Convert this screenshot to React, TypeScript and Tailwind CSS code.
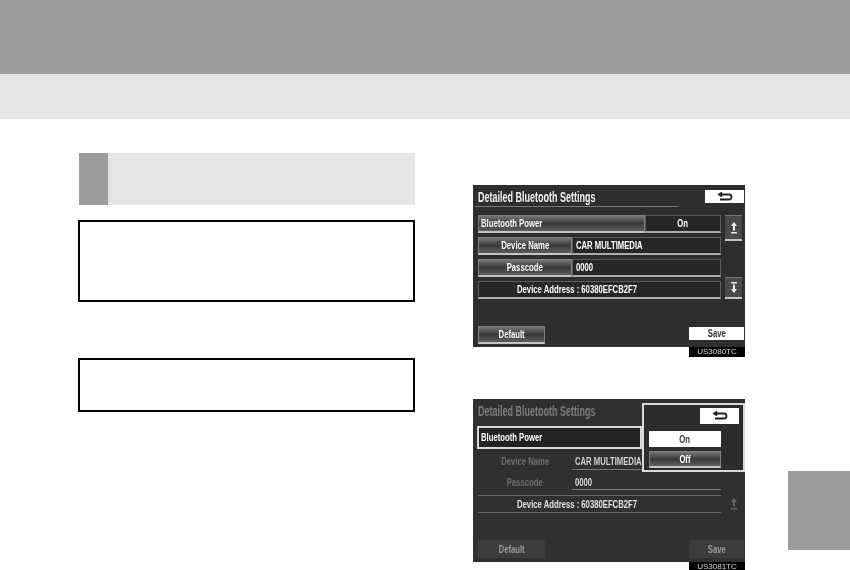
const font = { fontFamily: '"Liberation Sans", Arial, sans-serif' }

const btn = "flex items-center justify-center overflow-hidden text-white border border-[#808080] border-b-2 border-b-[#c4c4c4] bg-gradient-to-b from-[#777] via-[#3a3a3a] to-[#5c5c5c]"
const field = "flex items-center overflow-hidden text-white bg-[#262626] border border-[#5c5c5c] border-b-2 border-b-[#ababab]"

// the photographed screen uses a condensed face, so the text is squeezed
function Label({ children, left, className = "" }: { children: string; left?: boolean; className?: string }) {
  return (
    <span className={`inline-block whitespace-nowrap text-[11px] font-bold scale-x-[0.7] ${left ? "origin-left" : "origin-center"} ${className}`}>
      {children}
    </span>
  )
}

function Title({ dim }: { dim?: boolean }) {
  return (
    <span className={`inline-block whitespace-nowrap origin-left scale-x-[0.6] text-[15px] font-bold ${dim ? "text-[#7c7c7c]" : "text-[#f0f0f0]"}`}>
      Detailed Bluetooth Settings
    </span>
  )
}

function BackIcon() {
  return (
    <svg width="18" height="10" viewBox="0 0 18 10" fill="none" stroke="#222" strokeWidth="1.8">
      <path d="M5 2.5h8a2.2 2.2 0 0 1 0 5H4" />
      <path d="M6 0.5 3 2.5l3 2" fill="#222" />
    </svg>
  )
}

function ScrollIcon({ down, dim }: { down?: boolean; dim?: boolean }) {
  return (
    <svg width="6" height="14" viewBox="0 0 6 14" fill={dim ? "#666" : "#eee"}>
      <path d={down ? "M0 1h6v1.5H0zM2 3.5h2V8h2l-3 4-3-4h2z" : "M3 1l3 4H4v4.5H2V5H0zM0 11h6v1.5H0z"} />
    </svg>
  )
}

function ScreenCode({ code }: { code: string }) {
  return (
    <div className="flex justify-end bg-white">
      <span className="w-[56px] h-[10px] bg-black text-[#d8d8d8] text-[8px] leading-[10px] text-center blur-[0.4px]">{code}</span>
    </div>
  )
}

function MainScreen() {
  return (
    <div>
      <div className="h-[162px] bg-[#2e2e2e] pl-[2px] pr-[1px] pt-[4px] blur-[0.5px]">
        <div className="flex items-center justify-between h-[18px] pl-[3px] border-b border-[#777] mr-[66px]">
          <Title />
        </div>
        <div className="flex mt-[8px] pl-[3px]">
          <div className="w-[243px] flex flex-col gap-[4px]">
            <div className="flex h-[18px]">
              <div className={`${btn} w-[167px] !justify-start pl-[2px]`}><Label left>Bluetooth Power</Label></div>
              <div className={`${field} flex-1 justify-center`}><Label>On</Label></div>
            </div>
            <div className="flex h-[18px]">
              <div className={`${btn} w-[94px]`}><Label>Device Name</Label></div>
              <div className={`${field} flex-1 pl-[3px]`}><Label left>CAR MULTIMEDIA</Label></div>
            </div>
            <div className="flex h-[18px]">
              <div className={`${btn} w-[94px]`}><Label>Passcode</Label></div>
              <div className={`${field} flex-1 pl-[3px]`}><Label left>0000</Label></div>
            </div>
            <div className={`${field} h-[18px] pl-[38px]`}><Label left>Device Address : 60380EFCB2F7</Label></div>
          </div>
          <div className="w-[17px] ml-[4px] flex flex-col justify-between">
            <div className="h-[26px] flex items-center justify-center bg-[#4a4a4a] border-t border-[#777] border-b-2 border-b-[#c4c4c4]"><ScrollIcon /></div>
            <div className="h-[22px] flex items-center justify-center bg-[#4a4a4a] border-t border-[#777] border-b-2 border-b-[#c4c4c4]"><ScrollIcon down /></div>
          </div>
        </div>
        <div className="flex justify-between items-start mt-[27px] pl-[3px]">
          <div className={`${btn} w-[67px] h-[18px]`}><Label>Default</Label></div>
          <div className="w-[55px] h-[13px] mt-[1px] bg-white text-[#333] flex items-center justify-center"><Label>Save</Label></div>
        </div>
      </div>
      <ScreenCode code="US3080TC" />
    </div>
  )
}

function PopupScreen() {
  return (
    <div>
      <div className="relative h-[163px] bg-[#303030] pl-[2px] pr-[1px] pt-[4px] blur-[0.5px]">
        <div className="flex items-center h-[17px] pl-[3px]">
          <Title dim />
        </div>
        <div className="mt-[6px] ml-[2px] w-[165px] h-[23px] border-2 border-[#d8d8d8] bg-[#222] flex items-center pl-[2px] text-white">
          <Label left>Bluetooth Power</Label>
        </div>
        <div className="flex mt-[1px] ml-[3px] w-[243px] h-[20px]">
          <div className="w-[94px] pt-[3px] flex items-center justify-center text-[#6e6e6e]"><Label>Device Name</Label></div>
          <div className="flex-1 pt-[3px] flex items-center pl-[3px] text-[#d0d0d0] border-b border-[#777]"><Label left>CAR MULTIMEDIA</Label></div>
        </div>
        <div className="flex mt-[1px] ml-[3px] w-[243px] h-[19px]">
          <div className="w-[94px] pt-[4px] flex items-center justify-center text-[#6e6e6e]"><Label>Passcode</Label></div>
          <div className="flex-1 pt-[4px] flex items-center pl-[3px] text-[#d8d8d8] border-b border-[#777]"><Label left>0000</Label></div>
        </div>
        <div className="flex mt-[5px] ml-[3px]">
          <div className="w-[243px] h-[18px] pl-[39px] flex items-center text-[#e0e0e0] border-y border-[#666]"><Label left>Device Address : 60380EFCB2F7</Label></div>
          <div className="w-[17px] ml-[4px] flex items-center justify-center"><ScrollIcon dim /></div>
        </div>
        <div className="flex justify-between mt-[27px] pl-[3px]">
          <div className="w-[67px] h-[18px] bg-[#3c3c3c] flex items-center justify-center text-[#9a9a9a]"><Label>Default</Label></div>
          <div className="w-[55px] h-[18px] bg-[#3c3c3c] flex items-center justify-center text-[#9a9a9a]"><Label>Save</Label></div>
        </div>
        <div className="absolute left-[169px] top-[4px] w-[103px] h-[69px] border-2 border-[#d8d8d8] bg-[#2c2c2c] pl-[5px]">
          <div className="flex justify-end pr-[4px] pt-[3px]">
            <div className="w-[39px] h-[16px] bg-white flex items-center justify-center"><BackIcon /></div>
          </div>
          <div className="w-[72px] h-[16px] mt-[7px] bg-white text-[#333] flex items-center justify-center"><Label>On</Label></div>
          <div className={`${btn} w-[72px] h-[17px] mt-[4px]`}><Label>Off</Label></div>
        </div>
      </div>
      <ScreenCode code="US3081TC" />
    </div>
  )
}

export default function App() {
  return (
    <div className="w-[850px] h-[570px] bg-white overflow-hidden" style={font}>
      <div className="h-[74px] bg-[#9c9c9c]" />
      <div className="h-[45px] bg-[#e5e5e5]" />
      <div className="flex pl-[78px]">
        <div className="w-[337px] shrink-0 pt-[34px]">
          <div className="flex h-[52px] ml-[1px] bg-[#e5e5e5]">
            <div className="w-[29px] bg-[#9c9c9c]" />
          </div>
          <div className="h-[82px] mt-[15px] border-2 border-black" />
          <div className="h-[54px] mt-[56px] border-2 border-black" />
        </div>
        <div className="w-[272px] shrink-0 ml-[58px] pt-[66px]">
          <div className="relative">
            <MainScreen />
            <div className="absolute right-[1px] top-[5px] w-[39px] h-[13px] bg-white flex items-center justify-center blur-[0.5px]"><BackIcon /></div>
          </div>
          <div className="mt-[42px]">
            <PopupScreen />
          </div>
        </div>
        <div className="w-[62px] h-[79px] shrink-0 ml-[43px] mt-[352px] bg-[#9c9c9c]" />
      </div>
    </div>
  )
}
